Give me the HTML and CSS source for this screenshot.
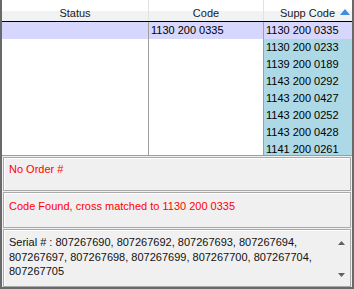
FILE: index.html
```html
<!DOCTYPE html>
<html>
<head>
<meta charset="utf-8">
<link rel="stylesheet" href="styles.css">
</head>
<body>
<div class="frame">
  <div class="grid">
    <div class="head">
      <div class="hcell c-status">Status</div>
      <div class="hcell c-code">Code</div>
      <div class="hcell c-supp">Supp Code<svg class="sort" width="10" height="6" viewBox="0 0 10 6"><path d="M5 0 L10 6 L0 6 Z" fill="#3f8ddc"/></svg></div>
    </div>
    <div class="body">
      <div class="col c-status"><div class="row sel"></div></div>
      <div class="col c-code"><div class="row sel">1130 200 0335</div></div>
      <div class="col c-supp">
        <div class="row sel">1130 200 0335</div>
        <div class="row">1130 200 0233</div>
        <div class="row">1139 200 0189</div>
        <div class="row">1143 200 0292</div>
        <div class="row">1143 200 0427</div>
        <div class="row">1143 200 0252</div>
        <div class="row">1143 200 0428</div>
        <div class="row">1141 200 0261</div>
      </div>
    </div>
  </div>
  <div class="box msg msg1">No Order #</div>
  <div class="box msg msg2">Code Found, cross matched to 1130 200 0335</div>
  <div class="box serial">
    <div class="serial-text">Serial # : 807267690, 807267692, 807267693, 807267694, 807267697, 807267698, 807267699, 807267700, 807267704, 807267705</div>
    <div class="scrollbar">
      <svg class="arrow" width="7" height="4" viewBox="0 0 7 4"><path d="M3.5 0 L7 4 L0 4 Z" fill="#606060"/></svg>
      <svg class="arrow" width="7" height="4" viewBox="0 0 7 4"><path d="M0 0 L7 0 L3.5 4 Z" fill="#606060"/></svg>
    </div>
  </div>
</div>
</body>
</html>
```
FILE: styles.css
```css
html, body {
  margin: 0;
  padding: 0;
}
body {
  width: 354px;
  height: 289px;
  overflow: hidden;
  font-family: "Liberation Sans", Arial, sans-serif;
  font-size: 11px;
  color: #000;
}
.frame {
  box-sizing: border-box;
  width: 354px;
  height: 289px;
  border: 2px solid #696969;
  border-top: 0;
  background: #f0f0f0;
  display: flex;
  flex-direction: column;
}
.grid {
  display: flex;
  flex-direction: column;
  border-bottom: 1px solid #9c9c9c;
}
.head {
  display: flex;
  height: 21px;
  border-bottom: 1px solid #000;
  background: linear-gradient(#ffffff 0, #ffffff 11px, #f1f2f4 11px, #f1f2f4 100%);
}
.c-status { width: 147px; }
.c-code { width: 115px; }
.c-supp { width: 88px; }
.hcell {
  box-sizing: border-box;
  display: flex;
  align-items: center;
  justify-content: center;
  padding-top: 4px;
  color: #1a1a1a;
}
.hcell.c-status, .hcell.c-code {
  border-right: 1px solid #e2e2e2;
}
.hcell.c-supp {
  justify-content: flex-end;
  padding-right: 2px;
  gap: 5px;
}
.sort {
  display: block;
  margin-top: -2px;
}
.body {
  display: flex;
  height: 133px;
  overflow: hidden;
  background: #fff;
}
.col {
  box-sizing: border-box;
  display: flex;
  flex-direction: column;
}
.col.c-status, .col.c-code {
  border-right: 1px solid #a0a0a0;
}
.col.c-supp {
  background: #add8e6;
}
.row {
  flex: none;
  height: 17px;
  line-height: 17px;
  padding-left: 2px;
  white-space: nowrap;
}
.row.sel {
  background: #d7d7fe;
}
.box {
  box-sizing: border-box;
  margin: 1px 1px 0;
  border: 1px solid #a9a9a9;
  box-shadow: inset 1px 1px 0 #ffffff;
  background: #f0f0f0;
}
.msg {
  color: #ff0000;
  padding: 5px 0 0 5px;
  line-height: 13px;
}
.msg1 { height: 34px; }
.msg2 { height: 36px; padding-top: 7px; }
.serial {
  height: 58px;
  display: flex;
  color: #111;
}
.serial-text {
  flex: 1;
  padding: 5px 4px 0 5px;
  line-height: 14.5px;
}
.scrollbar {
  width: 17px;
  display: flex;
  flex-direction: column;
  justify-content: space-between;
  align-items: center;
  padding: 11px 0 9px;
}
.arrow {
  display: block;
}
```
